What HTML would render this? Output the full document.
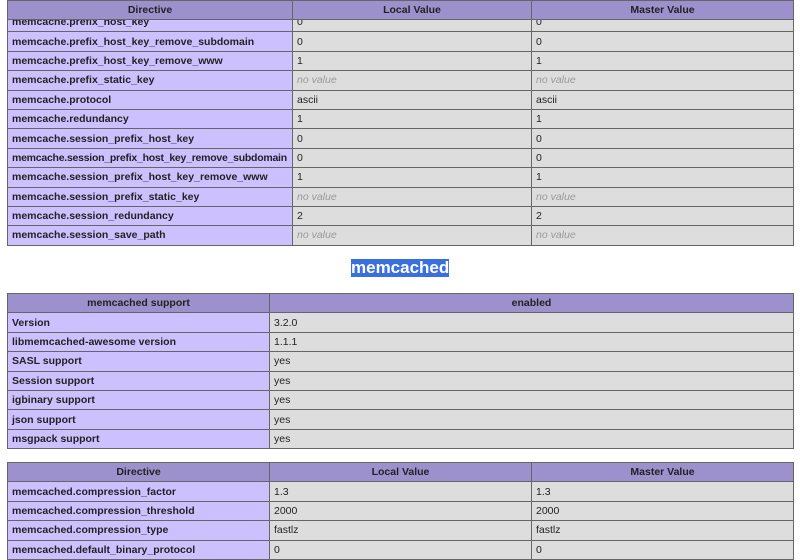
<!DOCTYPE html>
<html><head><meta charset="utf-8"><style>
body{margin:0;background:#fff;width:800px;height:536px;overflow:hidden;position:relative;font-family:"Liberation Sans",Arial,sans-serif;font-size:10.5px;color:#222}
table{position:absolute;left:7px;width:787px;border-collapse:collapse;table-layout:fixed}
td,th{border:1px solid #666;height:18.4px;padding:0 4px;vertical-align:middle;white-space:nowrap;overflow:hidden;line-height:12px}
th{background:#9c91cc;font-weight:bold;text-align:center;color:#222}
td.e{background:#cdc0ff;font-weight:bold;color:#222}
td.t{letter-spacing:-0.25px;padding-right:0}
td.v{background:#dddddd;color:#222}
i{color:#999}
h2{position:absolute;left:351px;top:259px;margin:0;width:98px;height:18px;background:#3a6fe0;color:#fff;font-size:17px;line-height:18px;text-align:center;font-weight:bold}
</style></head><body>
<table style="top:12px">
<col style="width:285px"><col style="width:239px"><col>
<tr><td class="e">memcache.prefix_host_key</td><td class="v">0</td><td class="v">0</td></tr>
<tr><td class="e">memcache.prefix_host_key_remove_subdomain</td><td class="v">0</td><td class="v">0</td></tr>
<tr><td class="e">memcache.prefix_host_key_remove_www</td><td class="v">1</td><td class="v">1</td></tr>
<tr><td class="e">memcache.prefix_static_key</td><td class="v"><i>no value</i></td><td class="v"><i>no value</i></td></tr>
<tr><td class="e">memcache.protocol</td><td class="v">ascii</td><td class="v">ascii</td></tr>
<tr><td class="e">memcache.redundancy</td><td class="v">1</td><td class="v">1</td></tr>
<tr><td class="e">memcache.session_prefix_host_key</td><td class="v">0</td><td class="v">0</td></tr>
<tr><td class="e t">memcache.session_prefix_host_key_remove_subdomain</td><td class="v">0</td><td class="v">0</td></tr>
<tr><td class="e">memcache.session_prefix_host_key_remove_www</td><td class="v">1</td><td class="v">1</td></tr>
<tr><td class="e">memcache.session_prefix_static_key</td><td class="v"><i>no value</i></td><td class="v"><i>no value</i></td></tr>
<tr><td class="e">memcache.session_redundancy</td><td class="v">2</td><td class="v">2</td></tr>
<tr><td class="e">memcache.session_save_path</td><td class="v"><i>no value</i></td><td class="v"><i>no value</i></td></tr>
</table>
<table style="top:0px">
<col style="width:285px"><col style="width:239px"><col>
<tr><th style="height:18px">Directive</th><th>Local Value</th><th>Master Value</th></tr>
</table>
<h2>memcached</h2>
<table style="top:293px">
<col style="width:262px"><col>
<tr><th>memcached support</th><th>enabled</th></tr>
<tr><td class="e">Version</td><td class="v">3.2.0</td></tr>
<tr><td class="e">libmemcached-awesome version</td><td class="v">1.1.1</td></tr>
<tr><td class="e">SASL support</td><td class="v">yes</td></tr>
<tr><td class="e">Session support</td><td class="v">yes</td></tr>
<tr><td class="e">igbinary support</td><td class="v">yes</td></tr>
<tr><td class="e">json support</td><td class="v">yes</td></tr>
<tr><td class="e">msgpack support</td><td class="v">yes</td></tr>
</table>
<table style="top:462px">
<col style="width:262px"><col style="width:262px"><col>
<tr><th>Directive</th><th>Local Value</th><th>Master Value</th></tr>
<tr><td class="e">memcached.compression_factor</td><td class="v">1.3</td><td class="v">1.3</td></tr>
<tr><td class="e">memcached.compression_threshold</td><td class="v">2000</td><td class="v">2000</td></tr>
<tr><td class="e">memcached.compression_type</td><td class="v">fastlz</td><td class="v">fastlz</td></tr>
<tr><td class="e">memcached.default_binary_protocol</td><td class="v">0</td><td class="v">0</td></tr>
</table>
</body></html>
